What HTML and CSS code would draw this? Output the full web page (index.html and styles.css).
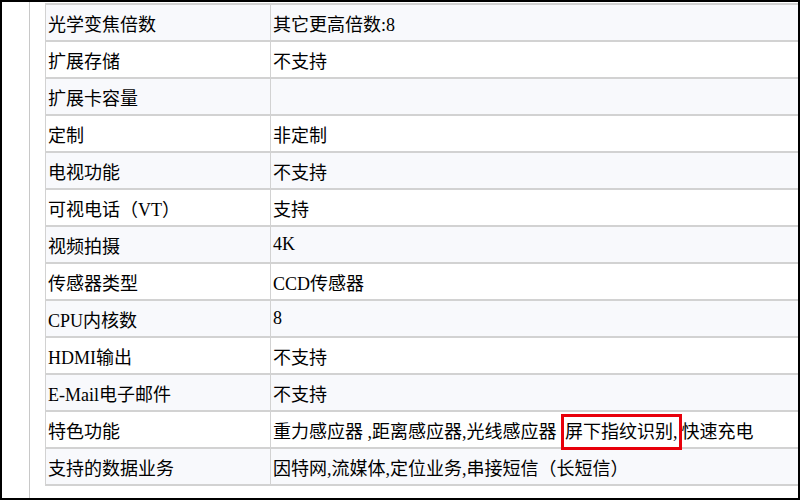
FILE: index.html
```html
<!DOCTYPE html>
<html lang="zh">
<head>
<meta charset="utf-8">
<title>参数</title>
<link rel="stylesheet" href="styles.css">
</head>
<body>
<div class="frame">
  <div class="gutter"></div>
  <div class="content">
    <table class="spec">
      <tbody>
        <tr><td class="k">光学变焦倍数</td><td>其它更高倍数:8</td></tr>
        <tr><td class="k">扩展存储</td><td>不支持</td></tr>
        <tr><td class="k">扩展卡容量</td><td></td></tr>
        <tr><td class="k">定制</td><td>非定制</td></tr>
        <tr><td class="k">电视功能</td><td>不支持</td></tr>
        <tr><td class="k">可视电话（VT）</td><td>支持</td></tr>
        <tr><td class="k">视频拍摄</td><td>4K</td></tr>
        <tr><td class="k">传感器类型</td><td>CCD传感器</td></tr>
        <tr><td class="k">CPU内核数</td><td>8</td></tr>
        <tr><td class="k">HDMI输出</td><td>不支持</td></tr>
        <tr><td class="k">E-Mail电子邮件</td><td>不支持</td></tr>
        <tr><td class="k">特色功能</td><td>重力感应器 ,距离感应器,光线感应器 <span class="mark">屏下指纹识别,</span>快速充电</td></tr>
        <tr><td class="k">支持的数据业务</td><td>因特网,流媒体,定位业务,串接短信（长短信）</td></tr>
      </tbody>
    </table>
  </div>
</div>
</body>
</html>
```
FILE: styles.css
```css
html, body {
  margin: 0;
  padding: 0;
  background: #fff;
}
.frame {
  box-sizing: border-box;
  width: 800px;
  height: 500px;
  border: 2px solid #000;
  display: flex;
  overflow: hidden;
  background: #fff;
}
.gutter {
  width: 27px;
  flex: none;
  border-right: 1px solid #c8c8c8;
}
.content {
  flex: 1;
  padding: 1px 0 0 15px;
  overflow: hidden;
}
.spec {
  border-collapse: collapse;
  width: 780px;
  font-family: "Liberation Serif", "Noto Sans CJK SC", serif;
  font-size: 18px;
  color: #000;
}
.spec td {
  height: 35px;
  padding: 0 2px;
  border-top: 2px solid #d2d2d2;
  border-bottom: 2px solid #d2d2d2;
  border-left: 1px solid #d2d2d2;
  border-right: 1px solid #d2d2d2;
  vertical-align: middle;
  white-space: nowrap;
}
.spec td.k {
  width: 220px;
}
.spec tr:nth-child(odd) td {
  background: #f8f9fc;
}
.mark {
  border: 3px solid #e8000b;
  padding: 5px 1px;
}
```
